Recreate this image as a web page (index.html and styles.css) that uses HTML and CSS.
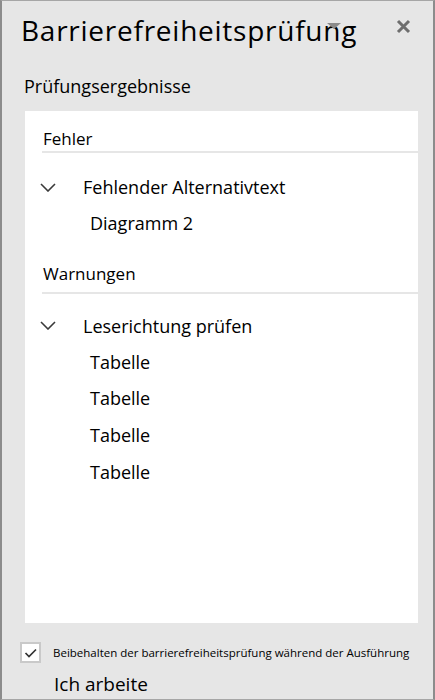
FILE: index.html
```html
<!DOCTYPE html>
<html lang="de">
<head>
<meta charset="utf-8">
<title>Barrierefreiheitsprüfung</title>
<link rel="stylesheet" href="styles.css">
</head>
<body>
<div class="pane">
  <header class="pane-header">
    <h1 class="pane-title">Barrierefreiheitsprüfung</h1>
    <span class="title-caret"></span>
    <button class="close-btn" aria-label="Schließen">
      <svg width="15" height="15" viewBox="0 0 15 15"><path d="M2 2 L13 13 M13 2 L2 13" stroke="#6e6e6e" stroke-width="3" stroke-linecap="butt"/></svg>
    </button>
  </header>
  <div class="results-label">Prüfungsergebnisse</div>
  <div class="results">
    <div class="group-heading group-errors">Fehler</div>
    <div class="issue issue-first">
      <svg class="chevron" width="16" height="9" viewBox="0 0 16 9"><path d="M1 1 L8 8 L15 1" fill="none" stroke="#3a3a3a" stroke-width="1.6"/></svg>
      <span class="issue-name">Fehlender Alternativtext</span>
    </div>
    <div class="item">Diagramm 2</div>
    <div class="group-heading group-warnings">Warnungen</div>
    <div class="issue">
      <svg class="chevron" width="16" height="9" viewBox="0 0 16 9"><path d="M1 1 L8 8 L15 1" fill="none" stroke="#3a3a3a" stroke-width="1.6"/></svg>
      <span class="issue-name">Leserichtung prüfen</span>
    </div>
    <div class="item">Tabelle</div>
    <div class="item">Tabelle</div>
    <div class="item">Tabelle</div>
    <div class="item">Tabelle</div>
  </div>
  <footer class="pane-footer">
    <label class="keep-row">
      <span class="checkbox">
        <svg width="13" height="10" viewBox="0 0 13 10"><path d="M1.5 5 L5 8.5 L12 1.5" fill="none" stroke="#333" stroke-width="1.7"/></svg>
      </span>
      <span class="keep-text">Beibehalten der barrierefreiheitsprüfung während der Ausführung</span>
    </label>
    <div class="working">Ich arbeite</div>
  </footer>
</div>
</body>
</html>
```

FILE: styles.css
```css
* { box-sizing: border-box; }
html, body { margin: 0; padding: 0; }
body {
  font-family: "Open Sans", "Liberation Sans", sans-serif;
  color: #000;
  background: #e6e6e6;
}
.pane {
  width: 435px;
  height: 700px;
  background: #e6e6e6;
  border: 1px solid #a6a6a6;
  border-left: 2px solid #8c8c8c;
  border-right: 2px solid #8c8c8c;
  display: flex;
  flex-direction: column;
}
.pane-header {
  position: relative;
  display: flex;
  align-items: flex-start;
  padding: 9px 0 0 19px;
  height: 50px;
}
.pane-title {
  margin: 0;
  font-weight: 400;
  font-size: 28px;
  line-height: 40px;
  letter-spacing: 0.75px;
}
.title-caret {
  position: absolute;
  left: 325px;
  top: 22px;
  width: 0;
  height: 0;
  border-left: 7px solid transparent;
  border-right: 7px solid transparent;
  border-top: 6px solid #8a8a8a;
}
.close-btn {
  position: absolute;
  right: 22px;
  top: 18px;
  padding: 0;
  border: 0;
  background: none;
  width: 15px;
  height: 15px;
  display: flex;
}
.results-label {
  font-size: 18px;
  line-height: 24px;
  margin: 23px 0 0 22px;
  height: 24px;
}
.results {
  flex: 1;
  margin: 13px 15px 0 23px;
  background: #fff;
  padding: 16px 0 0 0;
}
.group-heading {
  font-size: 17px;
  line-height: 24px;
  margin-left: 17px;
  border-bottom: 2px solid #e6e6e6;
  padding-left: 1px;
}
.group-errors { padding-bottom: 0; }
.group-warnings { margin-top: 20px; padding-bottom: 6px; }
.issue {
  display: flex;
  align-items: center;
  height: 36px;
  margin-top: 14px;
  font-size: 18px;
}
.issue-first { margin-top: 16px; }
.chevron {
  margin-left: 15px;
  margin-right: 27px;
  flex: none;
}
.issue-name {
  line-height: 36px;
}
.item {
  font-size: 18px;
  line-height: 36.7px;
  padding-left: 65px;
}
.pane-footer {
  height: 76px;
  padding: 19px 0 0 18px;
}
.keep-row {
  display: flex;
  align-items: center;
  height: 21px;
}
.checkbox {
  width: 21px;
  height: 21px;
  border: 2px solid #c9c9c9;
  background: #fff;
  display: flex;
  align-items: center;
  justify-content: center;
  flex: none;
}
.keep-text {
  margin-left: 12px;
  font-size: 11.5px;
  line-height: 21px;
}
.working {
  margin: 9px 0 0 34px;
  font-size: 19px;
  line-height: 24px;
}
```
